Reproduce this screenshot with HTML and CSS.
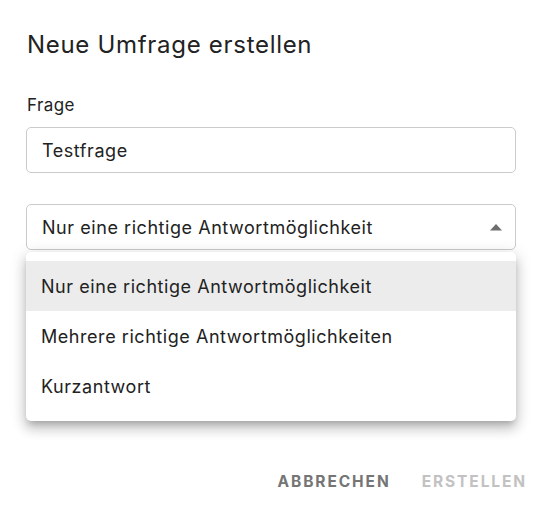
FILE: index.html
```html
<!DOCTYPE html>
<html lang="de">
<head>
<meta charset="utf-8">
<link rel="stylesheet" href="styles.css">
</head>
<body>
<div class="dialog">
  <h2 class="title">Neue Umfrage erstellen</h2>
  <div class="label">Frage</div>
  <div class="field">Testfrage</div>
  <div class="field select">
    <span>Nur eine richtige Antwortmöglichkeit</span>
    <svg class="arrow" width="14" height="8" viewBox="0 0 14 8"><path d="M1 7.5 L7 1 L13 7.5 Z" fill="#6e6e6e"/></svg>
  </div>
  <div class="field hidden-field"></div>
  <div class="actions">
    <span class="btn">ABBRECHEN</span>
    <span class="btn disabled">ERSTELLEN</span>
  </div>
</div>
<div class="menu">
  <div class="item active">Nur eine richtige Antwortmöglichkeit</div>
  <div class="item">Mehrere richtige Antwortmöglichkeiten</div>
  <div class="item">Kurzantwort</div>
</div>
</body>
</html>
```
FILE: styles.css
```css
html, body {
  margin: 0;
  padding: 0;
  background: #fff;
}
body {
  font-family: Inter, "Noto Sans", sans-serif;
  color: #222;
  position: relative;
  width: 545px;
  height: 511px;
  overflow: hidden;
}
.dialog {
  padding: 28px 29px 0 26px;
  display: flex;
  flex-direction: column;
}
.title {
  margin: 0 0 0 1px;
  font-size: 24px;
  font-weight: 400;
  letter-spacing: 0.7px;
  line-height: 34px;
  color: #222;
}
.label {
  margin: 32px 0 0 1px;
  font-size: 17px;
  letter-spacing: 0.4px;
  line-height: 22px;
}
.field {
  margin-top: 11px;
  height: 44px;
  border: 1px solid #cbcbcb;
  border-radius: 5px;
  padding: 0 15px;
  display: flex;
  align-items: center;
  font-size: 18px;
  letter-spacing: 0.55px;
}
.select {
  margin-top: 31px;
  justify-content: space-between;
  padding-right: 12px;
}
.hidden-field {
  margin-top: 115px;
}
.actions {
  margin-top: 61px;
  display: flex;
  justify-content: flex-end;
  gap: 31px;
  margin-right: -11px;
}
.btn {
  font-size: 15.5px;
  font-weight: 700;
  letter-spacing: 1.9px;
  color: #757575;
}
.btn.disabled {
  color: #c2c2c2;
}
.menu {
  position: absolute;
  left: 26px;
  top: 252px;
  width: 490px;
  padding: 9px 0 10px;
  background: #fff;
  border-radius: 5px;
  box-shadow: 0 5px 6px -3px rgba(0,0,0,0.2), 0 8px 12px 1px rgba(0,0,0,0.14), 0 3px 16px 2px rgba(0,0,0,0.12);
}
.item {
  height: 50px;
  display: flex;
  align-items: center;
  padding: 0 15px;
  font-size: 18px;
  letter-spacing: 0.55px;
  color: #222;
}
.item.active {
  background: #ececec;
}
```
